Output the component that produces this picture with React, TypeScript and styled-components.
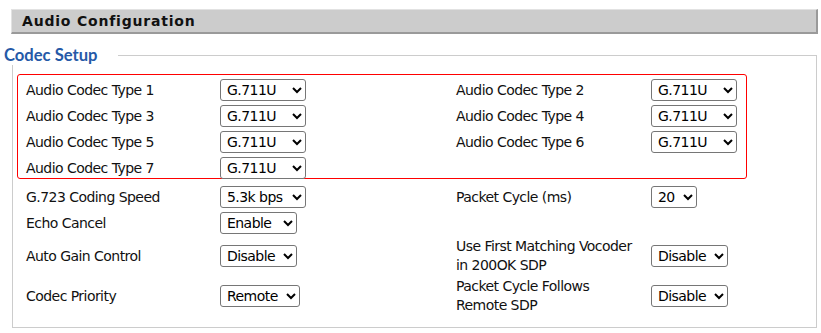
import styled, { createGlobalStyle } from 'styled-components';

const GlobalStyle = createGlobalStyle`
	html, body {
		margin: 0;
		padding: 0;
		background: #fff;
	}
	body {
		font-family: 'DejaVu Sans', Verdana, sans-serif;
		font-size: 14px;
		letter-spacing: -0.55px;
		color: #111;
	}
`;

type Field = {
	label: string;
	value: string;
	width: number;
};

const codecRows: [Field, Field | null][] = [
	[
		{ label: 'Audio Codec Type 1', value: 'G.711U', width: 86 },
		{ label: 'Audio Codec Type 2', value: 'G.711U', width: 86 },
	],
	[
		{ label: 'Audio Codec Type 3', value: 'G.711U', width: 86 },
		{ label: 'Audio Codec Type 4', value: 'G.711U', width: 86 },
	],
	[
		{ label: 'Audio Codec Type 5', value: 'G.711U', width: 86 },
		{ label: 'Audio Codec Type 6', value: 'G.711U', width: 86 },
	],
	[{ label: 'Audio Codec Type 7', value: 'G.711U', width: 86 }, null],
];

const otherRows: [Field, Field | null][] = [
	[
		{ label: 'G.723 Coding Speed', value: '5.3k bps', width: 86 },
		{ label: 'Packet Cycle (ms)', value: '20', width: 46 },
	],
	[{ label: 'Echo Cancel', value: 'Enable', width: 77 }, null],
	[
		{ label: 'Auto Gain Control', value: 'Disable', width: 77 },
		{ label: 'Use First Matching Vocoder in 200OK SDP', value: 'Disable', width: 77 },
	],
	[
		{ label: 'Codec Priority', value: 'Remote', width: 80 },
		{ label: 'Packet Cycle Follows Remote SDP', value: 'Disable', width: 77 },
	],
];

const renderRows = (rows: [Field, Field | null][]) =>
	rows.map(([left, right]) => (
		<Row key={left.label}>
			<Label>{left.label}</Label>
			<Cell>
				<Select $width={left.width} defaultValue={left.value}>
					<option>{left.value}</option>
				</Select>
			</Cell>
			{right ? (
				<>
					<Label>{right.label}</Label>
					<Cell>
						<Select $width={right.width} defaultValue={right.value}>
							<option>{right.value}</option>
						</Select>
					</Cell>
				</>
			) : (
				<>
					<Cell />
					<Cell />
				</>
			)}
		</Row>
	));

const App = () => {
	return (
		<>
			<GlobalStyle />
			<Page>
				<TitleBar>Audio Configuration</TitleBar>
				<Fieldset>
					<Legend>Codec Setup</Legend>
					<CodecBox>{renderRows(codecRows)}</CodecBox>
					<OtherBox>{renderRows(otherRows)}</OtherBox>
				</Fieldset>
			</Page>
		</>
	);
};

export default App;

const Page = styled.div`
	padding: 9px 0 0 4px;
`;

const TitleBar = styled.div`
	width: 807px;
	height: 25px;
	margin-left: 7px;
	box-sizing: border-box;
	padding-left: 10px;
	background: #cccccc;
	border-top: 1px solid #e2e2e2;
	border-left: 1px solid #e2e2e2;
	border-bottom: 2px solid #9a9a9a;
	border-right: 2px solid #9a9a9a;
	font-family: 'DejaVu Sans', Verdana, sans-serif;
	font-weight: 700;
	font-size: 14px;
	letter-spacing: 0.8px;
	line-height: 22px;
	color: #111;
`;

const Fieldset = styled.fieldset`
	width: 805px;
	box-sizing: border-box;
	margin: 11px 0 0 8px;
	padding: 0 0 11px 0;
	border: 1px solid #cccccc;
	min-width: 0;
`;

const Legend = styled.legend`
	margin-left: -9px;
	padding: 1px 21px 0 0;
	font-family: Lato, 'Liberation Sans', sans-serif;
	font-weight: 700;
	font-size: 16.6px;
	letter-spacing: 0;
	line-height: 19px;
	color: #2559a7;
`;

const CodecBox = styled.div`
	width: 730px;
	height: 105px;
	box-sizing: border-box;
	margin: 9px 0 0 4px;
	padding: 2px 0 0 8px;
	border: 1px solid #ff0000;
	border-radius: 3px;
`;

const OtherBox = styled.div`
	margin: 5px 0 0 13px;
`;

const Row = styled.div`
	display: grid;
	grid-template-columns: 194px 236px 195px auto;
	align-items: center;
`;

const Cell = styled.div`
	min-height: 26px;
	padding: 1px 0;
	box-sizing: border-box;
	display: flex;
	align-items: center;
`;

const Label = styled(Cell)`
	max-width: 186px;
	line-height: 19px;
	color: #111;
`;

const Select = styled.select<{ $width: number }>`
	width: ${(p) => p.$width}px;
	height: 22px;
	box-sizing: border-box;
	padding: 0 0 0 2px;
	border: 1px solid #767676;
	border-radius: 3px;
	background: #fff;
	color: #000;
	font-family: 'DejaVu Sans', Verdana, sans-serif;
	font-size: 14px;
	letter-spacing: -0.55px;
`;
